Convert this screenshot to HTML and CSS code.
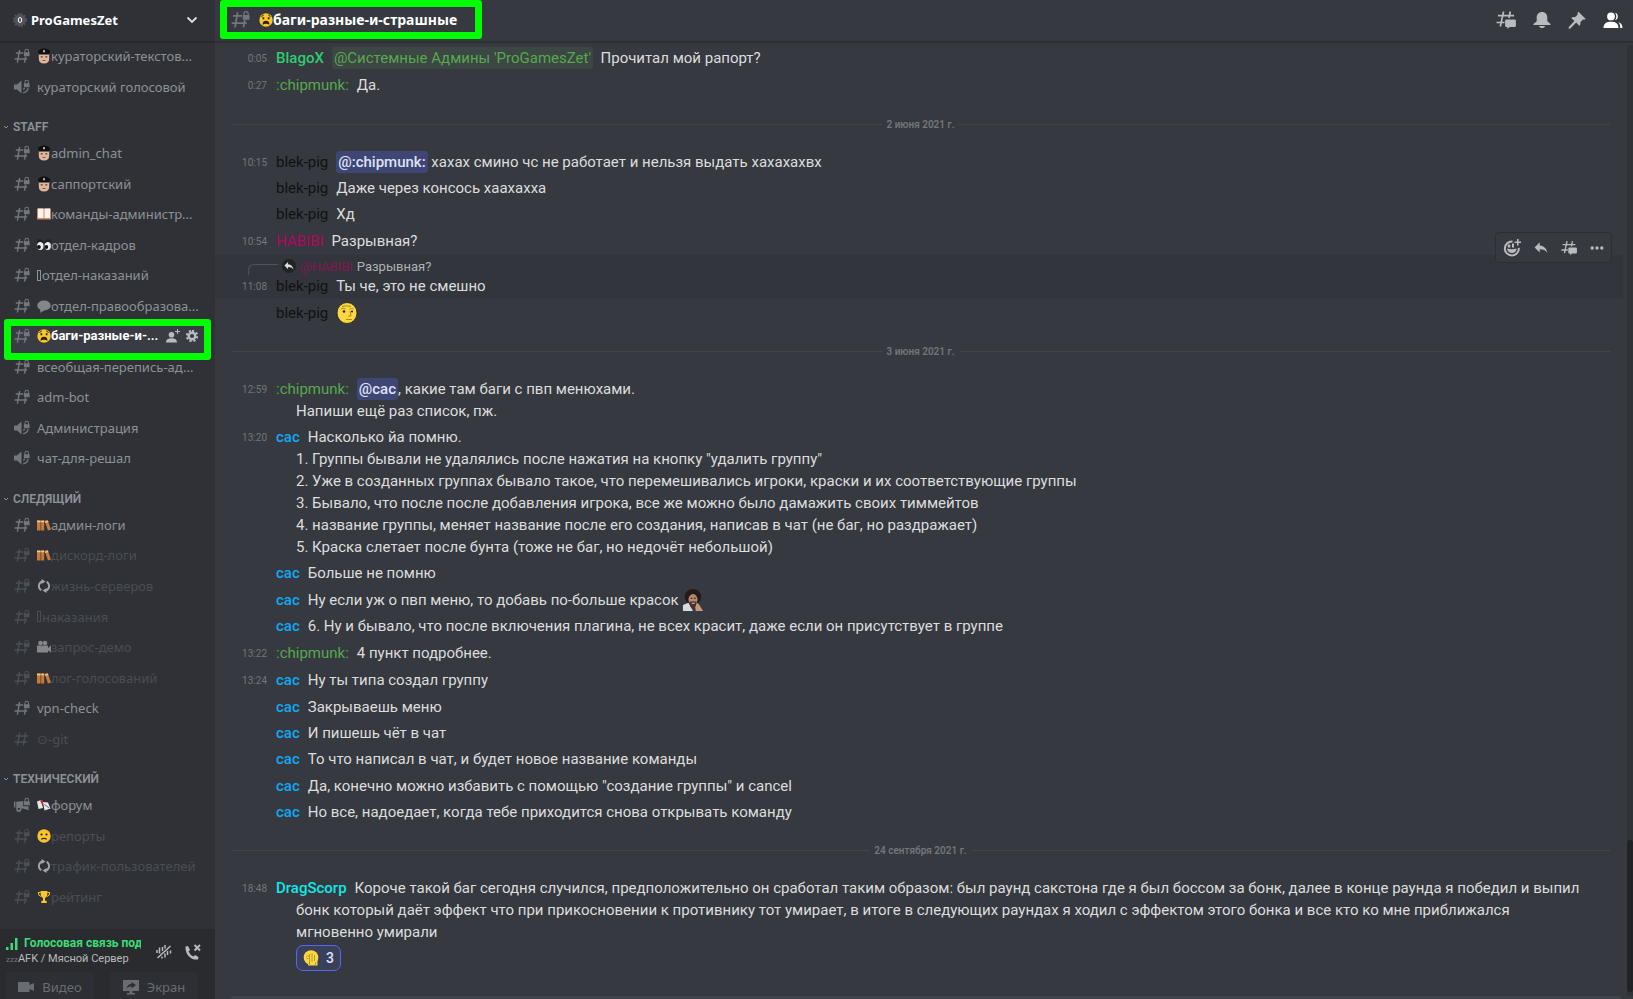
FILE: index.html
```html
<!DOCTYPE html>
<html lang="ru">
<head>
<meta charset="utf-8">
<title>ProGamesZet</title>
<link rel="stylesheet" href="styles.css">
</head>
<body>
<svg class="sprite" aria-hidden="true">
  <symbol id="hash" viewBox="0 0 16 16"><g fill="none" stroke="currentColor" stroke-width="1.5"><path d="M5.600 2 3.400 14.600M11.600 8.600l-1.100 6M1.800 5h7.400M.6 11h12.600"/></g><path fill="currentColor" d="M10.400 4.200V3.100a2.300 2.300 0 0 1 4.600 0v1.100h.6V8.200H9.900v-4zm1 0h2.600V3.100a1.300 1.300 0 0 0-2.600 0z"/></symbol>
  <symbol id="hash-open" viewBox="0 0 16 16"><path fill="none" stroke="currentColor" stroke-width="1.500" d="M5.600 1.500 3.400 14.600M11.600 1.500 9.400 14.600M1.800 5h12.600M.6 11h12.600"/></symbol>
  <symbol id="voice" viewBox="0 0 16 16"><path fill="currentColor" d="M0 5.500h3L7.500 1.500v13L3 10.500H0zM10.400 4.200V3.100a2.300 2.300 0 0 1 4.600 0v1.100h.6V8.200H9.900v-4zm1 0h2.600V3.100a1.300 1.300 0 0 0-2.600 0z"/><path fill="none" stroke="currentColor" stroke-width="1.400" d="M9.200 10.300q1.300-.4 1.300-1.600M9.200 13.700q4.400-.7 4.800-4.600"/></symbol>
  <symbol id="news" viewBox="0 0 16 16"><path fill="currentColor" d="M0 4.500h1.400v6H0zM2.200 4.700 9 4v5.200h5.500v4L9 11.500H7.500v1c0 1.500-1.300 2.500-2.700 2.500s-2.600-1-2.600-2.500zM3.800 11v1.300q1.200 1.300 2.200 0V11zM10.400 4.200V3.100a2.300 2.300 0 0 1 4.600 0v1.100h.8v4H9.700v-4zm1 0h2.600V3.100a1.300 1.300 0 0 0-2.600 0z"/></symbol>
  <symbol id="thread" viewBox="0 0 20 18"><path fill="none" stroke="currentColor" stroke-width="1.700" d="M7.600.5 4.300 15.500M14.300.5 13 7M2 4.700h16M.5 11.500h8"/><path fill="currentColor" d="M10.300 8.500h8.400a1.200 1.200 0 0 1 1.200 1.200v5a1.200 1.200 0 0 1-1.200 1.200h-5L11.400 18v-2.100h-1.100a1.200 1.200 0 0 1-1.200-1.200v-5a1.200 1.200 0 0 1 1.200-1.200z"/></symbol>
  <symbol id="bell" viewBox="0 0 18 18"><path fill="currentColor" d="M9 1c3.200 0 5.300 2.400 5.300 5.500v3.700L17.500 13v1H.5v-1l3.200-2.800V6.500C3.700 3.400 5.800 1 9 1zM6 15h6c-.5 1.400-1.500 2-3 2s-2.500-.6-3-2z"/></symbol>
  <symbol id="pin" viewBox="0 0 18 18"><path fill="currentColor" d="m10.500.8 7 7-1 1-1.500-.2-2.700 2.700c.3 1.600.1 2.500-.8 3.600l-3.300-3.300L2 17.800.5 17.400l.3-1.400 5.600-5.900L3.200 7c1.200-1 2.200-1.200 3.700-.8l2.800-2.800-.2-1.600z"/></symbol>
  <symbol id="people" viewBox="0 0 20 18"><path fill="currentColor" d="M8 1.500a3.900 3.900 0 0 1 0 7.800 3.900 3.900 0 0 1 0-7.800zM.5 17c0-4.300 2.900-6.200 7.500-6.200s7.500 1.900 7.500 6.200zM12 1.700a3.900 3.900 0 0 1 0 7.500c1.800-2.300 1.800-5.200 0-7.500zM15.500 11.200c2.600.8 4 2.700 4 5.800h-2.300c0-2.400-.3-4.100-1.700-5.800z"/></symbol>
  <symbol id="react" viewBox="0 0 18 18"><path fill="none" stroke="currentColor" stroke-width="2" d="M9.500 2.500a7 7 0 1 0 6.300 6.300"/><path fill="currentColor" d="M4 9.500q5 1.500 9.500 0c0 3-2 4.500-4.500 4.500S4.500 12.500 4 9.500zM4.800 5.500h2.500v3H4.800zM9 4.500h2v4H9zM14 0h1.600v2.400H18V4h-2.400v2.400H14V4h-2.400V2.400H14z"/></symbol>
  <symbol id="reply" viewBox="0 0 16 16"><path fill="currentColor" d="M6.500 5V1.500L.7 7.300l5.800 5.800V9.400c4.200 0 6.800 1.200 8.800 4.200-.8-4.500-3.400-8-8.800-8.600z"/></symbol>
  <symbol id="dots" viewBox="0 0 16 16"><g fill="currentColor"><circle cx="2.500" cy="8" r="1.900"/><circle cx="8" cy="8" r="1.900"/><circle cx="13.500" cy="8" r="1.900"/></g></symbol>
  <symbol id="chevron" viewBox="0 0 12 12"><path fill="none" stroke="currentColor" stroke-width="1.900" d="m1.500 3.500 4.500 4.500 4.500-4.500"/></symbol>
  <symbol id="fold" viewBox="0 0 8 8"><path fill="none" stroke="currentColor" d="m2 3 2 2 2-2"/></symbol>
  <symbol id="invite" viewBox="0 0 14 14"><path fill="currentColor" d="M5.500 3a2.800 2.800 0 0 1 0 5.600 2.800 2.800 0 0 1 0-5.600zM0 13.500C0 10.600 2 9.300 5.500 9.300S11 10.600 11 13.500zM11 0h1v2h2v1h-2v2h-1V3H9V2h2z"/></symbol>
  <symbol id="gear" viewBox="0 0 14 14"><path fill="none" stroke="currentColor" stroke-width="2.600" stroke-dasharray="2.500 2.219" d="M7 1a6 6 0 1 1 0 12A6 6 0 0 1 7 1z"/><circle cx="7" cy="7" r="3.800" fill="none" stroke="currentColor" stroke-width="2.800"/></symbol>
  <symbol id="cop" viewBox="0 0 14 16"><path fill="#dfb59c" d="M1.800 6h10.400v4.500q0 5-5.200 5t-5.200-5z"/><path fill="#111" d="M.8 3q6.200-5.500 12.400 0l-1.200 3.600H2z"/><path fill="#eee" d="m7 1.700 1 1.400-1 1.600-1-1.600z"/><path fill="#5f3f33" d="M3.700 8.300h2v1.200h-2zM8.300 8.300h2v1.200h-2zM5.500 12.200h3v.8h-3z"/></symbol>
  <symbol id="book" viewBox="0 0 14 14"><path fill="#c98b5b" d="M0 1.500h14v11H0z"/><path fill="#f7f3ee" d="M1 1.500h5.500V11H1zM7.500 1.500H13V11H7.500z"/></symbol>
  <symbol id="eyes" viewBox="0 0 14 14"><ellipse cx="3.300" cy="8" rx="3.200" ry="4" fill="#eee"/><ellipse cx="10.700" cy="8" rx="3.200" ry="4" fill="#eee"/><path fill="#222" d="M0 2q3-2 6.500 1.500v2Q3 2.500 0 5zM7.500 3.500Q10 0 14 2v3q-3.500-2.500-6.500.5z"/><circle cx="1.900" cy="9" r="1.900" fill="#111"/><circle cx="9.300" cy="9" r="1.900" fill="#111"/></symbol>
  <symbol id="bubble" viewBox="0 0 14 14"><ellipse cx="7" cy="6.500" rx="6.700" ry="5" fill="#85868a"/><path fill="#85868a" d="m3 9 .5 5L8 10.500z"/></symbol>
  <symbol id="weary" viewBox="0 0 14 14"><circle cx="7" cy="7" r="6.700" fill="#fcc52b"/><path fill="none" stroke="#2a2411" stroke-width="1" d="m2.500 3.500 2.200-1.500M11.500 3.500 9.300 2"/><path fill="#2a2411" d="M3.500 4.300h1.700v2H3.500zM8.800 4.300h1.700v2H8.800zM3.600 11.800Q3.400 7.800 7 7.800t3.400 4Q7 9.500 3.600 11.800z"/></symbol>
  <symbol id="sad" viewBox="0 0 14 14"><circle cx="7" cy="7" r="6.700" fill="#fcc52b"/><circle cx="4.500" cy="5.500" r="1.100" fill="#222"/><circle cx="9.500" cy="5.500" r="1.100" fill="#222"/><path fill="none" stroke="#222" stroke-width="1.200" d="M4.300 10.300q2.700-2 5.400 0"/></symbol>
  <symbol id="books" viewBox="0 0 14 14"><path fill="#c67b39" d="M0 2h3.600v10.500H0zM4.200 2h3v10.500h-3zM7.600 2.700l3-1 3.400 9.800-3 1z"/><path fill="#e9cdb0" d="M0 3h3.600v1.200H0zM4.200 3h3v1.200h-3zM8 3.700l3-1 .4 1.200-3 1z"/></symbol>
  <symbol id="cycle" viewBox="0 0 14 14"><path fill="none" stroke="#a3a4a8" stroke-width="1.900" d="M5 2.300C1.200 4 .8 9 4.300 11.300M9 11.700c3.800-1.700 4.200-6.700.7-9"/><path fill="#a3a4a8" d="m4.500 0 4 2.500-4 2.500zM9.500 9v5l-4-2.500z"/></symbol>
  <symbol id="camera" viewBox="0 0 14 14"><path fill="#85868a" d="M0 5.500h11v7H0zM11 8l3-2.500v7l-3-2z"/><circle cx="3.500" cy="3" r="2.300" fill="#85868a"/><circle cx="8" cy="3" r="2.300" fill="#85868a"/></symbol>
  <symbol id="mail" viewBox="0 0 14 14"><path fill="#e9e6e6" d="m0 3.500 4-1.500 2 8-4.500 1zM6 4l5 .5 2.500 6-6 2z"/><path fill="#c9252d" d="m3 2.300 3-.3v5L5 6.500z"/><path fill="#777" d="m7.500 6 5 3.500-.5.700-5-3.500z"/></symbol>
  <symbol id="cup" viewBox="0 0 14 14"><path fill="#fcc52b" d="M3.500 1h7c0 4-.7 6.300-2.500 7v2.700h1.700V13H4.300v-2.300H6V8C4.200 7.300 3.500 5 3.500 1z"/><path fill="none" stroke="#fcc52b" d="M3.500 2.500H1.200q0 3.500 3 4M10.500 2.500h2.300q0 3.500-3 4"/></symbol>
  <symbol id="wojak" viewBox="0 0 22 22"><ellipse cx="11" cy="11" rx="10" ry="10.500" fill="#fbd746" stroke="#222" stroke-width=".8"/><path fill="none" stroke="#a88a1e" d="M6 4.500q5-1.500 9 0M5 7q2-1.500 4.500 0M13.500 7q2-1 4 0M14 9l1 5h-2.500M10 17.500h6"/><circle cx="8" cy="9.500" r="1.200" fill="#222"/><circle cx="16" cy="9.500" r="1" fill="#222"/></symbol>
  <symbol id="facepalm" viewBox="0 0 16 16"><circle cx="8" cy="7.500" r="7.300" fill="#fbd746"/><path fill="#fbd746" d="M5 8h9.500v7.500H5z"/><path fill="none" stroke="#a88c22" stroke-width=".8" d="M3 6.500q1.500-1.500 3 0M6.500 4v8M9 3v9M11.500 5v6M3.500 8.500h2M6.500 12v3M13 12l-1 3"/></symbol>
  <symbol id="painter" viewBox="0 0 22 24"><ellipse cx="11" cy="8.500" rx="9" ry="8.500" fill="#261a18"/><path fill="#d9dbdc" d="M0 24v-6.500l6-2.500 5 9z"/><ellipse cx="11" cy="11.500" rx="4.900" ry="6" fill="#b98872"/><path fill="#4a3029" d="M7 14q4-1.500 8 0l-1 5q-3 2.500-6 0z"/><path fill="#e8d9ce" d="M9.500 15h3.500v1H9.500z"/><path fill="#c99579" d="m13.500 20 1.500-5 2 1 5 8h-8z"/><path fill="#222" d="M8.500 9.500h2v1h-2zM12 9.500h2v1h-2z"/></symbol>
</svg>

<div class="app">
  <aside class="sidebar">
    <header class="server">
      <svg class="server-badge" viewBox="0 0 14 14"><circle cx="7" cy="7" r="5.500" fill="#4f545c"/><circle cx="7" cy="7" r="6" fill="none" stroke="#4f545c" stroke-width="2" stroke-dasharray="2 1.140"/><ellipse cx="7" cy="7" rx="1.700" ry="2.500" fill="none" stroke="#fff"/></svg>
      <h1 class="server-name">ProGamesZet</h1>
      <button class="icon-button server-menu" aria-label="Меню сервера"><svg class="i12"><use href="#chevron"/></svg></button>
    </header>
    <nav class="channels" aria-label="Каналы">
      <ul class="group">
        <li class="channel"><a href="#"><svg class="kind"><use href="#hash"/></svg><svg class="emoji"><use href="#cop"/></svg><span class="label">кураторский-текстов...</span></a></li>
        <li class="channel"><a href="#"><svg class="kind"><use href="#voice"/></svg><span class="label">кураторский голосовой</span></a></li>
      </ul>
      <h2 class="category"><svg class="i8"><use href="#fold"/></svg>STAFF</h2>
      <ul class="group">
        <li class="channel"><a href="#"><svg class="kind"><use href="#hash"/></svg><svg class="emoji"><use href="#cop"/></svg><span class="label">admin_chat</span></a></li>
        <li class="channel"><a href="#"><svg class="kind"><use href="#hash"/></svg><svg class="emoji"><use href="#cop"/></svg><span class="label">саппортский</span></a></li>
        <li class="channel"><a href="#"><svg class="kind"><use href="#hash"/></svg><svg class="emoji"><use href="#book"/></svg><span class="label">команды-администр...</span></a></li>
        <li class="channel"><a href="#"><svg class="kind"><use href="#hash"/></svg><svg class="emoji"><use href="#eyes"/></svg><span class="label">отдел-кадров</span></a></li>
        <li class="channel"><a href="#"><svg class="kind"><use href="#hash"/></svg><span class="tofu"></span><span class="label">отдел-наказаний</span></a></li>
        <li class="channel"><a href="#"><svg class="kind"><use href="#hash"/></svg><svg class="emoji"><use href="#bubble"/></svg><span class="label">отдел-правообразова...</span></a></li>
        <li class="channel selected"><a href="#" aria-current="page"><svg class="kind"><use href="#hash"/></svg><svg class="emoji"><use href="#weary"/></svg><span class="label">баги-разные-и-...</span></a><button class="icon-button" aria-label="Пригласить"><svg class="i14"><use href="#invite"/></svg></button><button class="icon-button" aria-label="Настроить канал"><svg class="i12"><use href="#gear"/></svg></button></li>
        <li class="channel"><a href="#"><svg class="kind"><use href="#hash"/></svg><span class="label">всеобщая-перепись-ад...</span></a></li>
        <li class="channel"><a href="#"><svg class="kind"><use href="#hash"/></svg><span class="label">adm-bot</span></a></li>
        <li class="channel"><a href="#"><svg class="kind"><use href="#voice"/></svg><span class="label">Администрация</span></a></li>
        <li class="channel"><a href="#"><svg class="kind"><use href="#voice"/></svg><span class="label">чат-для-решал</span></a></li>
      </ul>
      <h2 class="category"><svg class="i8"><use href="#fold"/></svg>СЛЕДЯЩИЙ</h2>
      <ul class="group">
        <li class="channel"><a href="#"><svg class="kind"><use href="#hash"/></svg><svg class="emoji"><use href="#books"/></svg><span class="label">админ-логи</span></a></li>
        <li class="channel muted"><a href="#"><svg class="kind"><use href="#hash"/></svg><svg class="emoji"><use href="#books"/></svg><span class="label">дискорд-логи</span></a></li>
        <li class="channel muted"><a href="#"><svg class="kind"><use href="#hash"/></svg><svg class="emoji"><use href="#cycle"/></svg><span class="label">жизнь-серверов</span></a></li>
        <li class="channel muted"><a href="#"><svg class="kind"><use href="#hash"/></svg><span class="tofu"></span><span class="label">наказания</span></a></li>
        <li class="channel muted"><a href="#"><svg class="kind"><use href="#hash"/></svg><svg class="emoji"><use href="#camera"/></svg><span class="label">запрос-демо</span></a></li>
        <li class="channel muted"><a href="#"><svg class="kind"><use href="#hash"/></svg><svg class="emoji"><use href="#books"/></svg><span class="label">лог-голосований</span></a></li>
        <li class="channel"><a href="#"><svg class="kind"><use href="#hash"/></svg><span class="label">vpn-check</span></a></li>
        <li class="channel muted"><a href="#"><svg class="kind"><use href="#hash-open"/></svg><span class="label">⊙-git</span></a></li>
      </ul>
      <h2 class="category"><svg class="i8"><use href="#fold"/></svg>ТЕХНИЧЕСКИЙ</h2>
      <ul class="group">
        <li class="channel"><a href="#"><svg class="kind"><use href="#news"/></svg><svg class="emoji"><use href="#mail"/></svg><span class="label">форум</span></a></li>
        <li class="channel muted"><a href="#"><svg class="kind"><use href="#hash"/></svg><svg class="emoji"><use href="#sad"/></svg><span class="label">репорты</span></a></li>
        <li class="channel muted"><a href="#"><svg class="kind"><use href="#hash"/></svg><svg class="emoji"><use href="#cycle"/></svg><span class="label">трафик-пользователей</span></a></li>
        <li class="channel muted"><a href="#"><svg class="kind"><use href="#hash"/></svg><svg class="emoji"><use href="#cup"/></svg><span class="label">рейтинг</span></a></li>
      </ul>
    </nav>
    <section class="voice">
      <div class="voice-row">
        <div class="voice-info">
          <div class="voice-status"><svg class="i12" viewBox="0 0 12 12"><path fill="currentColor" d="M0 9h2.500v3H0zM4.500 5H7v7H4.500zM9 0h2.500v12H9z"/></svg><span>Голосовая связь подк</span></div>
          <div class="voice-room"><small>zzz</small>AFK / Мясной Сервер</div>
        </div>
        <button class="icon-button" aria-label="Шумоподавление"><svg class="i16" viewBox="0 0 16 16"><path fill="none" stroke="currentColor" stroke-width="1.500" d="M1 6v3M3.500 3.500v6M6.500 3v4M9 1v3.500M9 9.500v4M11.500 7v4M14.500 6.500v3M6 12.500v2M1.500 14 14.500 2"/></svg></button>
        <button class="icon-button" aria-label="Отключиться"><svg class="i16" viewBox="0 0 16 16"><path fill="currentColor" d="M.5 2.500 3 2l2 4-1.500 1.500Q5 11 8.500 12.500L10 11l3.500 2-.5 2.500C5.500 16.500 0 10 .5 2.500z"/><path stroke="currentColor" stroke-width="1.900" d="m9.500 1 5.500 5.500M15 1 9.500 6.500"/></svg></button>
      </div>
      <div class="voice-actions">
        <button class="wide"><svg class="i16" viewBox="0 0 16 16"><path fill="currentColor" d="M0 3h11.500v3L16 4v8l-4.500-2v3H0z"/></svg>Видео</button>
        <button class="wide"><svg class="i16" viewBox="0 0 16 16"><path fill="currentColor" fill-rule="evenodd" d="M0 1h16v11H9.500v2H12v1.500H4V14h2.500v-2H0zm8.500 2v2C5.500 5 4 7 3.500 9.500c1.500-1.500 3-2 5-2v2L13 6z"/></svg>Экран</button>
      </div>
    </section>
  </aside>

  <main class="chat">
    <header class="chat-head">
      <h2 class="chat-title"><svg class="hash-lg"><use href="#hash"/></svg><svg class="emoji"><use href="#weary"/></svg>баги-разные-и-страшные</h2>
      <div class="tools">
        <button class="icon-button" aria-label="Ветки"><svg class="i20"><use href="#thread"/></svg></button>
        <button class="icon-button" aria-label="Уведомления"><svg class="i18"><use href="#bell"/></svg></button>
        <button class="icon-button" aria-label="Закреплённые"><svg class="i18"><use href="#pin"/></svg></button>
        <button class="icon-button active" aria-label="Участники"><svg class="i20"><use href="#people"/></svg></button>
      </div>
    </header>
    <div class="chat-body">
      <div class="feed">
        <article class="msg start"><time>0:05</time><p><b class="green">BlagoX</b><span class="role">@Системные Админы 'ProGamesZet'</span>&nbsp; Прочитал мой рапорт?</p></article>
        <article class="msg start"><time>0:27</time><p><b class="lime">:chipmunk:</b>Да.</p></article>
        <div class="day"><span>2 июня 2021 г.</span></div>
        <article class="msg"><time>10:15</time><p><b class="dark">blek-pig</b><span class="mention">@:chipmunk:</span> хахах смино чс не работает и нельзя выдать хахахахвх</p></article>
        <article class="msg"><time></time><p><b class="dark">blek-pig</b>Даже через консось хаахахха</p></article>
        <article class="msg start"><time></time><p><b class="dark">blek-pig</b>Хд</p></article>
        <article class="msg start"><time>10:54</time><p><b class="pink">HABIBI</b>Разрывная?</p></article>
        <article class="msg start hovered">
          <div class="quote"><span class="spine"></span><span class="quote-icon"><svg class="i10"><use href="#reply"/></svg></span><span class="pink">@HABIBI</span><span>Разрывная?</span></div>
          <time>11:08</time><p><b class="dark">blek-pig</b>Ты че, это не смешно</p>
          <div class="actions">
            <button class="icon-button" aria-label="Добавить реакцию"><svg class="i18"><use href="#react"/></svg></button>
            <button class="icon-button" aria-label="Ответить"><svg class="i14"><use href="#reply"/></svg></button>
            <button class="icon-button" aria-label="Создать ветку"><svg class="i16"><use href="#thread"/></svg></button>
            <button class="icon-button" aria-label="Ещё"><svg class="i14"><use href="#dots"/></svg></button>
          </div>
        </article>
        <article class="msg"><time></time><p><b class="dark">blek-pig</b><svg class="inline-emoji"><use href="#wojak"/></svg></p></article>
        <div class="day"><span>3 июня 2021 г.</span></div>
        <article class="msg"><time>12:59</time><p><b class="lime">:chipmunk:</b><span class="mention">@cac</span>, какие там баги с пвп менюхами.<br>Напиши ещё раз список, пж.</p></article>
        <article class="msg"><time>13:20</time><p><b class="blue">cac</b>Насколько йа помню.<br>1. Группы бывали не удалялись после нажатия на кнопку "удалить группу"<br>2. Уже в созданных группах бывало такое, что перемешивались игроки, краски и их соответствующие группы<br>3. Бывало, что после после добавления игрока, все же можно было дамажить своих тиммейтов<br>4. название группы, меняет название после его создания, написав в чат (не баг, но раздражает)<br>5. Краска слетает после бунта (тоже не баг, но недочёт небольшой)</p></article>
        <article class="msg start"><time></time><p><b class="blue">cac</b>Больше не помню</p></article>
        <article class="msg"><time></time><p><b class="blue">cac</b>Ну если уж о пвп меню, то добавь по-больше красок <svg class="inline-emoji"><use href="#painter"/></svg></p></article>
        <article class="msg start"><time></time><p><b class="blue">cac</b>6. Ну и бывало, что после включения плагина, не всех красит, даже если он присутствует в группе</p></article>
        <article class="msg start"><time>13:22</time><p><b class="lime">:chipmunk:</b>4 пункт подробнее.</p></article>
        <article class="msg start"><time>13:24</time><p><b class="blue">cac</b>Ну ты типа создал группу</p></article>
        <article class="msg"><time></time><p><b class="blue">cac</b>Закрываешь меню</p></article>
        <article class="msg"><time></time><p><b class="blue">cac</b>И пишешь чёт в чат</p></article>
        <article class="msg start"><time></time><p><b class="blue">cac</b>То что написал в чат, и будет новое название команды</p></article>
        <article class="msg"><time></time><p><b class="blue">cac</b>Да, конечно можно избавить с помощью "создание группы" и cancel</p></article>
        <article class="msg"><time></time><p><b class="blue">cac</b>Но все, надоедает, когда тебе приходится снова открывать команду</p></article>
        <div class="day"><span>24 сентября 2021 г.</span></div>
        <article class="msg"><time>18:48</time><p><b class="cyan">DragScorp</b>Короче такой баг сегодня случился, предположительно он сработал таким образом: был раунд сакстона где я был боссом за бонк, далее в конце раунда я победил и выпил бонк который даёт эффект что при прикосновении к противнику тот умирает, в итоге в следующих раундах я ходил с эффектом этого бонка и все кто ко мне приближался мгновенно умирали</p>
          <button class="reaction"><svg class="i16"><use href="#facepalm"/></svg>3</button></article>
      </div>
      <div class="scrollbar"><div class="thumb"></div></div>
    </div>
    <div class="composer"></div>
  </main>
</div>
</body>
</html>
```
FILE: styles.css
```css
* { box-sizing: border-box; }
body {
  margin: 0;
  background: #36393f;
  color: #dcddde;
  font-family: Roboto, "Noto Sans", sans-serif;
  font-size: 15px;
}
h1, h2, p, ul { margin: 0; padding: 0; }
ul { list-style: none; }
button { font: inherit; color: inherit; border: 0; background: none; padding: 0; }
svg { display: block; flex: none; }
.sprite { position: absolute; width: 0; height: 0; }
.i8 { width: 8px; height: 8px; }
.i10 { width: 10px; height: 10px; }
.i12 { width: 12px; height: 12px; }
.i14 { width: 14px; height: 14px; }
.i16 { width: 16px; height: 16px; }
.i18 { width: 18px; height: 18px; }
.i20 { width: 20px; height: 18px; }
.icon-button { display: flex; color: #b9bbbe; }

/* Sidebar */
.app { display: flex; height: 100vh; overflow: hidden; }
.sidebar { display: flex; flex-direction: column; flex: none; width: 215px; background: #2f3136; font-family: "Noto Sans", "Open Sans", sans-serif; }
.server { display: flex; align-items: center; gap: 4px; flex: none; height: 43px; padding: 0 17px 2px 13px; border-bottom: 2px solid #26282c; }
.server-badge { width: 14px; height: 14px; }
.server-name { flex: 1; color: #fff; font-size: 13px; font-weight: 700; line-height: 20px; }
.server-menu { color: #dcddde; }
.channels { display: flex; flex-direction: column; flex: 1; min-height: 0; padding-bottom: 15px; }
.group { display: contents; }
.channel { display: flex; align-items: center; flex: 1 1 28px; padding: 0 8px 4px 0; position: relative; color: #8e9297; }
.channel a { display: flex; align-items: center; flex: 1; min-width: 0; padding-left: 14px; color: inherit; text-decoration: none; }
.kind { width: 16px; height: 16px; margin-right: 7px; color: #72767d; }
.emoji { width: 14px; height: 16px; }
.tofu { flex: none; width: 4px; height: 11px; margin-right: 1px; border: 1px solid currentColor; }
.label { white-space: nowrap; font-size: 13px; line-height: 20px; }
.muted, .muted .kind { color: #4a4e55; }
.selected { color: #fff; font-family: Roboto, sans-serif; font-weight: 700; background: linear-gradient(#393c43, #393c43) 7px 0 / 200px 100% no-repeat; gap: 6px; padding-right: 17px; }
.selected::after { content: ""; position: absolute; inset: -4px 4px -6px 4px; border: 7px solid #0f0; border-radius: 3px; pointer-events: none; }
.category { display: flex; align-items: center; gap: 3px; flex: none; height: 36px; padding: 10px 0 0 2px; color: #8e9297; font-family: Roboto, sans-serif; font-size: 12px; font-weight: 600; }

.voice { flex: none; height: 70px; overflow: hidden; padding: 7px 14px 0 6px; background: #292b2f; }
.voice-row { display: flex; align-items: center; gap: 13px; }
.voice-info { flex: 1; min-width: 0; padding-right: 2px; }
.voice-status { display: flex; align-items: center; gap: 6px; color: #3ddc77; font-family: Roboto, sans-serif; font-size: 12px; font-weight: 700; line-height: 15px; overflow: hidden; white-space: nowrap; }
.voice-status span { overflow: hidden; }
.voice-room { color: #b9bbbe; font-family: Roboto, sans-serif; font-size: 11px; line-height: 15px; white-space: nowrap; }
.voice-room small { font-size: 8px; color: #72767d; }
.voice-actions { display: flex; gap: 16px; margin-top: 5px; padding-right: 3px; }
.wide { display: flex; align-items: center; justify-content: center; gap: 8px; flex: 1; height: 30px; border-radius: 3px; background: #2d2f34; color: #696c72; font-size: 13px; }

/* Chat */
.chat { display: flex; flex-direction: column; flex: 1; min-width: 0; }
.chat-head { display: flex; align-items: center; justify-content: space-between; flex: none; height: 43px; padding: 0 10px 2px 5px; border-bottom: 2px solid #2c2f34; }
.chat-title { display: flex; align-items: center; height: 39px; padding: 0 18px 0 4px; border: 7px solid #0f0; border-radius: 3px; color: #fff; font-family: "Noto Sans", sans-serif; font-size: 14px; font-weight: 700; line-height: 20px; }
.hash-lg { width: 19px; height: 19px; margin-right: 9px; color: #72767d; }
.tools { display: flex; align-items: center; gap: 17px; }
.active { color: #fff; }
.chat-body { display: flex; flex: 1; min-height: 0; }
.feed { flex: 1; min-width: 0; overflow: hidden; padding-top: 2px; margin-right: 4px; }
.msg { position: relative; padding: 2px 40px 2px 81px; }
.start { margin-bottom: 1px; }
.msg time { float: left; width: 52px; margin-left: -81px; text-align: right; color: #72767d; font-size: 10px; line-height: 24px; }
.msg p { text-indent: -20px; font-size: 15px; line-height: 22px; }
.msg b { margin-right: 8px; font-weight: 400; }
.green { color: #2ecc71; }
.lime { color: #57a84f; }
.dark { color: #101113; }
.pink { color: #b5055f; }
.blue { color: #0fa9f5; }
.cyan { color: #10e8e8; }
.msg .green, .msg .blue, .msg .cyan { font-weight: 500; }
.role { padding: 0 2px; border-radius: 3px; background: #3c4643; color: #57a84f; }
.mention { padding: 0 2px; border-radius: 3px; background: #3f4673; color: #dee0fc; font-weight: 500; }
.role, .mention { padding-top: 2px; padding-bottom: 2px; }
.day { display: flex; align-items: center; gap: 4px; height: 50px; margin: 0 13px 0 16px; color: #72767d; font-size: 10px; font-weight: 600; }
.day::before, .day::after { content: ""; flex: 1; height: 1px; background: #42454a; }
.hovered { background: #32353b; }
.quote { display: flex; align-items: center; gap: 4px; height: 18px; margin-left: -48px; font-size: 13px; color: #b0b2b5; }
.quote .pink { opacity: .6; }
.spine { align-self: flex-end; width: 30px; height: 11px; border: solid #4f545c; border-width: 1px 0 0 1px; border-radius: 6px 0 0 0; }
.quote-icon { display: grid; place-items: center; width: 14px; height: 14px; border-radius: 50%; background: #202225; color: #dcddde; }
.actions { position: absolute; top: -23px; right: 11px; display: flex; align-items: center; gap: 13px; height: 31px; padding: 0 7px; border: 1px solid #2c2e33; border-radius: 4px; background: #36393f; }
.inline-emoji { display: inline-block; width: 22px; height: 22px; vertical-align: bottom; }
.reaction { display: flex; align-items: center; gap: 7px; height: 26px; margin-top: 2px; padding: 0 6px; border: 1px solid #5865f2; border-radius: 7px; background: #3b405a; color: #dee0fc; font-size: 14px; font-weight: 500; }
.scrollbar { display: flex; flex-direction: column; justify-content: flex-end; width: 6px; margin-top: 2px; padding-bottom: 4px; background: #2e3338; border-radius: 3px 0 0 0; }
.thumb { height: 16%; border-radius: 3px; background: #202225; }
.composer { flex: none; height: 3px; margin: 0 12px 0 16px; border-radius: 4px 4px 0 0; background: #40444b; }
```
